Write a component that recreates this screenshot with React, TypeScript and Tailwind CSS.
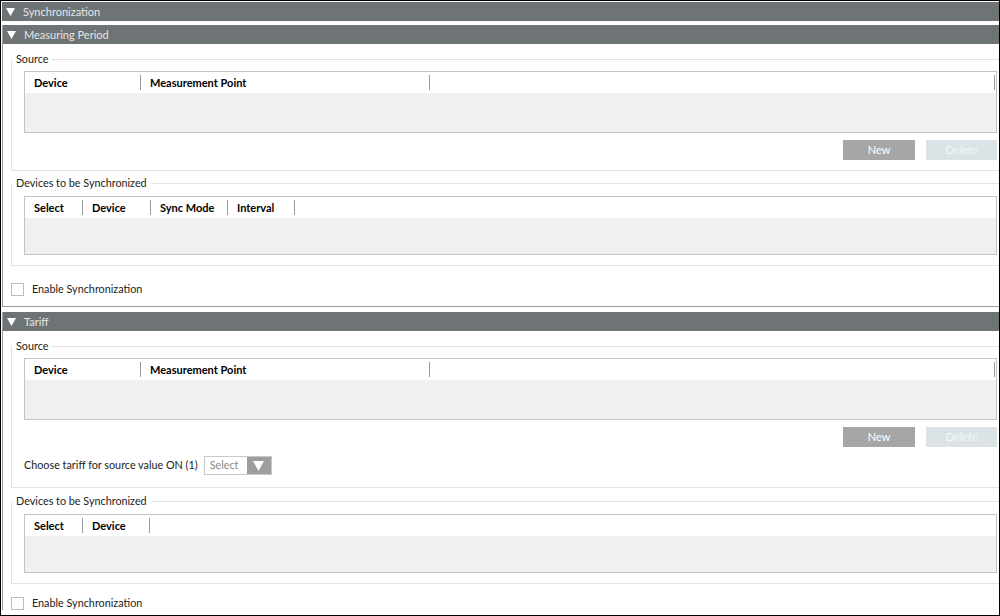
import React from "react";

const FONT = "font-['Lato','Noto_Sans',sans-serif]";

function Bar({ title }: { title: string }) {
  return (
    <div className="h-[19px] bg-[#6e7376] flex items-center text-[11px] text-[#e6e6e6] leading-none">
      <svg width="9" height="8" viewBox="0 0 9 8" className="ml-[4px] mr-[8px]">
        <path d="M0 0 L9 0 L4.5 8 Z" fill="#ffffff" />
      </svg>
      <span>{title}</span>
    </div>
  );
}

function Table({ cols, height, rightSep }: { cols: { label: string; w: number }[]; height: number; rightSep?: boolean }) {
  return (
    <div className="mr-[2px] border border-[#c4c4c4] bg-[#f0f0f0] flex flex-col" style={{ height }}>
      <div className="h-[21px] bg-white flex items-center">
        {cols.map((c) => (
          <div key={c.label} className="flex items-center h-full" style={{ width: c.w }}>
            <span className="pl-[9px] flex-1 text-[11px] font-bold text-black leading-none">{c.label}</span>
            <span className="w-[1px] h-[15px] bg-[#9a9a9a]" />
          </div>
        ))}
        <div className="flex-1" />
        {rightSep && <span className="w-[1px] h-[15px] bg-[#9a9a9a] mr-[1px]" />}
      </div>
    </div>
  );
}

function Group({ label, children, className }: { label: string; children: React.ReactNode; className?: string }) {
  return (
    <fieldset className={`ml-[8px] border-t border-l border-b border-[#e2e2e2] ${className ?? ""}`}>
      <legend className="px-[4px] text-[10.8px] leading-[14px] text-[#222]">{label}</legend>
      <div className="pl-[12px]">{children}</div>
    </fieldset>
  );
}

function Buttons() {
  return (
    <div className="flex justify-end gap-[11px] mr-[2px] mt-[7px]">
      <div className="w-[72px] h-[20px] bg-[#a6a6a6] text-white text-[11px] flex items-center justify-center">New</div>
      <div className="w-[71px] h-[20px] bg-[#dce3e6] text-[#f4f6f7] text-[11px] flex items-center justify-center">Delete</div>
    </div>
  );
}

function Check() {
  return (
    <div className="flex items-center ml-[8px]">
      <span className="w-[13px] h-[13px] border border-[#bcbcbc] bg-white" />
      <span className="ml-[8px] text-[10.8px] text-[#222] leading-none">Enable Synchronization</span>
    </div>
  );
}

export default function App() {
  return (
    <div className={`w-[1000px] h-[616px] box-border border border-black bg-white overflow-hidden ${FONT}`}>
      <div className="ml-[1px] mt-[1px]">
        <Bar title="Synchronization" />
      </div>
      <div className="ml-[1px] mt-[4px] border-l border-b border-[#9c9c9c] pb-[10px]">
        <Bar title="Measuring Period" />
        <Group label="Source" className="mt-[8px] pb-[10px]">
          <div className="mt-[5px]">
            <Table cols={[{ label: "Device", w: 116 }, { label: "Measurement Point", w: 289 }]} height={62} rightSep />
          </div>
          <Buttons />
        </Group>
        <Group label="Devices to be Synchronized" className="mt-[5px] pb-[10px]">
          <div className="mt-[6px]">
            <Table
              cols={[
                { label: "Select", w: 58 },
                { label: "Device", w: 68 },
                { label: "Sync Mode", w: 77 },
                { label: "Interval", w: 67 },
              ]}
              height={59}
            />
          </div>
        </Group>
        <div className="mt-[17px]">
          <Check />
        </div>
      </div>
      <div className="ml-[1px] mt-[5px] border-l border-[#9c9c9c]">
        <Bar title="Tariff" />
        <Group label="Source" className="mt-[8px] pb-[12px]">
          <div className="mt-[5px]">
            <Table cols={[{ label: "Device", w: 116 }, { label: "Measurement Point", w: 289 }]} height={62} rightSep />
          </div>
          <Buttons />
          <div className="flex items-center mt-[9px]">
            <span className="text-[10.8px] text-[#222] leading-none">Choose tariff for source value ON (1)</span>
            <div className="ml-[6px] w-[68px] h-[19px] border border-[#c8c8c8] flex">
              <span className="flex-1 pl-[5px] text-[10.8px] text-[#8a8a8a] flex items-center leading-none">Select</span>
              <span className="w-[24px] h-full bg-[#9e9e9e] flex items-center justify-center">
                <svg width="11" height="10" viewBox="0 0 11 10">
                  <path d="M0 0 L11 0 L5.5 10 Z" fill="#ffffff" />
                </svg>
              </span>
            </div>
          </div>
        </Group>
        <Group label="Devices to be Synchronized" className="mt-[6px] pb-[10px]">
          <div className="mt-[6px]">
            <Table
              cols={[
                { label: "Select", w: 58 },
                { label: "Device", w: 67 },
              ]}
              height={59}
            />
          </div>
        </Group>
        <div className="mt-[13px]">
          <Check />
        </div>
      </div>
    </div>
  );
}
